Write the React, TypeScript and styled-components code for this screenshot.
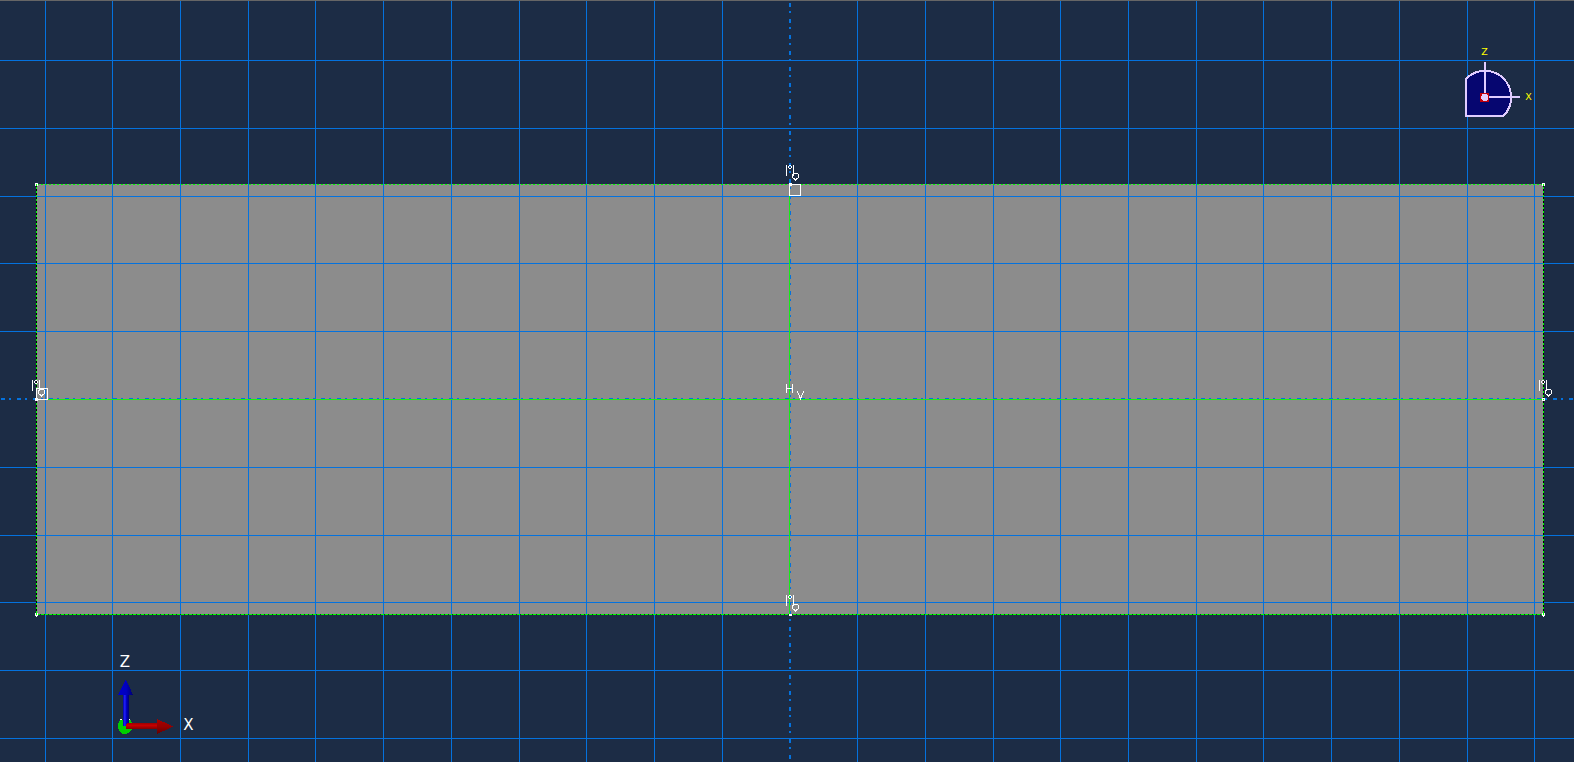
import React from 'react';
import styled, { createGlobalStyle } from 'styled-components';

const GlobalStyle = createGlobalStyle`
  html, body { margin: 0; padding: 0; background: #1c2c45; overflow: hidden; }
`;

const Viewport = styled.main`
  display: flex;
  width: 1574px;
  height: 762px;
  background: #1c2c45;
  overflow: hidden;
`;

const Canvas = styled.svg`
  display: block;
  flex: none;
`;

const Crisp = styled.g`
  shape-rendering: crispEdges;
`;

const Stroke = styled.path<{ $color: string; $width?: number; $dash?: string; $offset?: number }>`
  fill: none;
  stroke: ${p => p.$color};
  stroke-width: ${p => p.$width ?? 1};
  stroke-dasharray: ${p => p.$dash ?? 'none'};
  stroke-dashoffset: ${p => p.$offset ?? 0};
`;

const Label = styled.text<{ $color?: string; $size: number }>`
  fill: ${p => p.$color ?? '#ffffff'};
  font-family: 'DejaVu Sans', sans-serif;
  font-size: ${p => p.$size}px;
`;

const BLUE = '#0472de';
const GREEN = '#00ff00';
const columns = Array.from({ length: 23 }, (_, i) => Math.floor(45.02 + 67.72 * i)).filter((_, i) => i !== 11);
const rows = [60, 128, 196, 263, 331, 467, 535, 602, 670, 738];

const Grid = () => (
  <Crisp>
    {columns.map(x => <Stroke key={x} $color={BLUE} d={`M${x + 0.5} 1V762`} />)}
    {rows.map(y => <Stroke key={y} $color={BLUE} d={`M0 ${y + 0.5}H1574`} />)}
    <Stroke $color={BLUE} $width={2} $dash="4 4 2 6" $offset={15} d="M0 399H1574" />
    <Stroke $color={BLUE} $width={2} $dash="4 4 2 6" $offset={13} d="M790 0V762" />
  </Crisp>
);

const Outline = () => (
  <Crisp>
    <Stroke $color="#000000" d="M36.5 184V614M1543.5 184V614" />
    <Stroke $color="#0b3a17" d="M37 614.5H1543" />
    <Stroke $color={GREEN} $dash="2 2" d="M37 184.5H1543M36.5 187V614M1543.5 187V614" />
    <Stroke $color={GREEN} $dash="3 1" d="M37 614.5H1543" />
    <Stroke $color="#14f014" d="M37 399.5H1543M789.5 185V614" />
  </Crisp>
);

/* Equal-distance constraint marker: two bars and two ring glyphs. */
const EqualMark = ({ x, y, drop = 1 }: { x: number; y: number; drop?: number }) => (
  <g transform={`translate(${x} ${y})`}>
    <Crisp>
      <Stroke $color="#fff" d="M.5 0V11M7.5 0V11" />
      <Stroke $color="#fff" d="M3 .5H5M3 3.5H5M2.5 1V3M5.5 1V3" />
      <g transform={`translate(0 ${drop})`}>
        <Stroke $color="#fff" d="M7 8.5H12M6.5 9V13M12.5 9V13M7 13.5H9M10 13.5H12M8 14.5H11M9 15.5H10" />
      </g>
    </Crisp>
  </g>
);

const ViewCompass = () => (
  <g>
    <path d="M1466 116V79A26 26 0 0 1 1511 97A26 26 0 0 1 1503.5 116Z"
      fill="#060670" stroke="#e0ccff" strokeWidth="2" shapeRendering="crispEdges" />
    <Crisp>
      <Stroke $color="#e0ccff" $width={2} d="M1485 62V96M1486 97H1520" />
      <rect x="1480" y="93" width="9" height="9" fill="#c4000c" />
    </Crisp>
    <circle cx="1484.7" cy="97.5" r="3.6" fill="#e0ccff" shapeRendering="crispEdges" />
    <Label $size={9.5} $color="#ffff00" x="1481.3" y="55">Z</Label>
    <Label $size={9.5} $color="#ffff00" x="1525.2" y="100">X</Label>
  </g>
);

const Triad = () => (
  <g>
    <defs>
      <linearGradient id="shaftZ"><stop stopColor="#0000a0" /><stop offset=".3" stopColor="#2424ff" /><stop offset=".55" stopColor="#0000c8" /><stop offset="1" stopColor="#000070" /></linearGradient>
      <linearGradient id="headZ"><stop stopColor="#0000c8" /><stop offset=".55" stopColor="#0000c0" /><stop offset="1" stopColor="#000070" /></linearGradient>
      <linearGradient id="shaftX" x2="0" y2="1"><stop stopColor="#9c0000" /><stop offset=".4" stopColor="#c80000" /><stop offset="1" stopColor="#840000" /></linearGradient>
      <linearGradient id="headX" x2="0" y2="1"><stop stopColor="#a80000" /><stop offset=".5" stopColor="#960000" /><stop offset="1" stopColor="#620000" /></linearGradient>
    </defs>
    <Crisp>
      <path d="M120 720H131Q133 724 132 729Q129 734 125 734Q120 734 118.3 729Q117.4 723 120 720Z" fill="#00d000" />
      <Stroke $color="#fff" d="M120 719.5H122M129 719.5H130" />
      <path d="M123 694H129V723L126 726H123Z" fill="url(#shaftZ)" />
      <path d="M125.8 679L133 695H118Z" fill="url(#headZ)" />
      <path d="M126 724L128 723H158V729H126Z" fill="url(#shaftX)" />
      <path d="M157 719L173.5 726.5L157 734Z" fill="url(#headX)" />
    </Crisp>
    <Label $size={15} x="119.8" y="667">Z</Label>
    <Label $size={15} x="183.3" y="730">X</Label>
  </g>
);

export default function App() {
  return (
    <>
      <GlobalStyle />
      <Viewport>
        <Canvas width="1574" height="762" viewBox="0 0 1574 762" role="img" aria-label="Sketch viewport">
          <rect x="36" y="184" width="1508" height="431" fill="#8c8c8c" />
          <Grid />
          <Outline />
          <Crisp>
            <rect width="1574" height="1" fill="#666666" />
            <path fill="#fff" d="M35 183h3v3h-3zM1542 183h3v3h-3zM35 613h3v3h-3zM36 616h1v1h-1zM1542 613h3v3h-3zM1543 616h1v1h-1zM789 183h3v3h-3zM35 398h3v3h-3zM1542 398h3v3h-3zM789 614h3v2h-3z" />
            <path fill="#00ff00" d="M36 184h1v2h-1zM1543 184h1v2h-1zM36 613h1v2h-1zM1543 613h1v2h-1zM1543 399h1v1h-1z" />
            <Stroke $color="#fff" d="M789.5 184.5h11v11h-11zM36.5 388.5h11v11h-11z" />
            <Stroke $color="#fff" d="M786.5 384V393M792.5 384V393M787 388.5H792" />
            <Stroke $color="#fff" d="M797.5 391V393M798.5 393V395M799.5 395V398M800.5 397V400M801.5 395V398M802.5 393V395M803.5 391V393" />
          </Crisp>
          <EqualMark x={786} y={165} drop={0} />
          <EqualMark x={32} y={380} />
          <EqualMark x={1539} y={380} />
          <EqualMark x={786} y={595} />
          <ViewCompass />
          <Triad />
        </Canvas>
      </Viewport>
    </>
  );
}
